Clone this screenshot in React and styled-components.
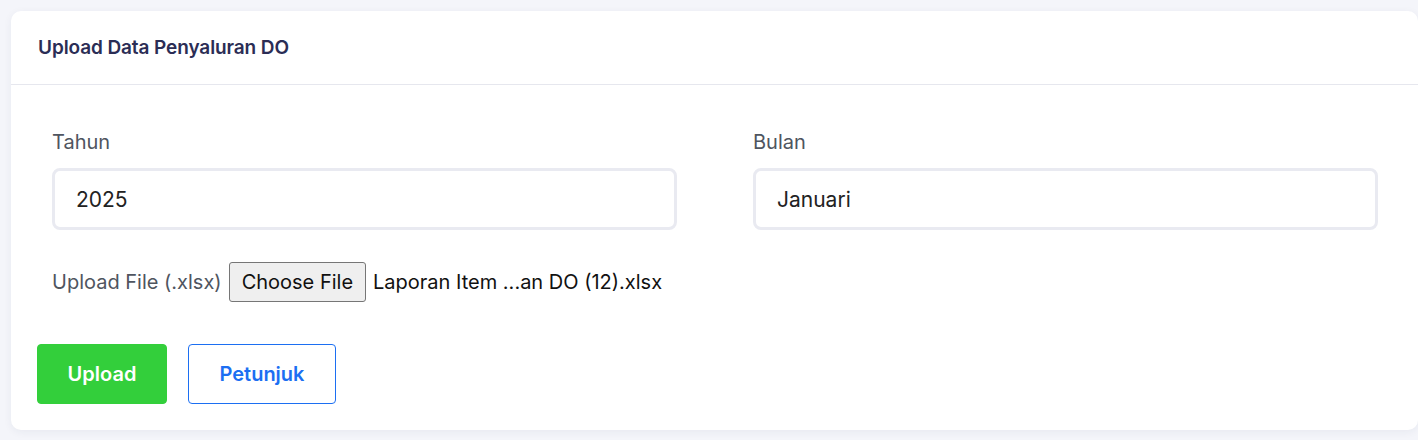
import React from 'react';
import styled, { createGlobalStyle } from 'styled-components';

const GlobalStyle = createGlobalStyle`
    body {
        margin: 0;
        background: #f4f5fa;
        font-family: 'Inter', 'Noto Sans', sans-serif;
    }
`;

const Page = styled.div`
    padding: 11px 0 0 11px;
    height: 440px;
    box-sizing: border-box;
    overflow: hidden;
`;

const Card = styled.section`
    background: #ffffff;
    border-radius: 10px;
    box-shadow: 0 2px 8px rgba(40, 45, 90, 0.06);
    width: 1407px;
    height: 419px;
`;

const CardHeader = styled.header`
    height: 74px;
    display: flex;
    align-items: center;
    padding: 0 27px;
    border-bottom: 1px solid #e6e7ee;
    box-sizing: border-box;
`;

const Title = styled.h1`
    margin: 0;
    font-size: 19px;
    font-weight: 600;
    letter-spacing: -0.1px;
    color: #2b2d55;
`;

const CardBody = styled.div`
    padding: 44px 40px 0 41px;
`;

const FieldGrid = styled.div`
    display: grid;
    grid-template-columns: 625px 625px;
    column-gap: 76px;
`;

const Field = styled.div`
    display: flex;
    flex-direction: column;
`;

const Label = styled.label`
    font-size: 20px;
    color: #4f5560;
    line-height: 26px;
    margin-bottom: 13px;
`;

const Input = styled.input`
    height: 62px;
    box-sizing: border-box;
    border: 3px solid #e9eaf1;
    border-radius: 8px;
    padding: 0 21px;
    font-family: inherit;
    font-size: 21px;
    color: #222;
    outline: none;
`;

const FileRow = styled.div`
    display: flex;
    align-items: center;
    gap: 7px;
    margin-top: 32px;
    font-size: 20px;
`;

const FileLabel = styled.span`
    color: #4f5560;
`;

const FileButton = styled.button`
    height: 40px;
    padding: 0 12px;
    font-family: inherit;
    font-size: 20px;
    color: #111;
    background: #efefef;
    border: 1px solid #767676;
    border-radius: 3px;
`;

const FileName = styled.span`
    color: #111;
`;

const Actions = styled.div`
    display: flex;
    gap: 21px;
    margin: 42px 0 0 -15px;
`;

const Button = styled.button`
    height: 60px;
    width: ${(p) => p.$width}px;
    font-family: inherit;
    font-size: 20px;
    font-weight: 600;
    border-radius: 4px;
    cursor: pointer;
    background: ${(p) => (p.$outline ? '#ffffff' : '#33cf3b')};
    color: ${(p) => (p.$outline ? '#1c6ff2' : '#ffffff')};
    border: 1px solid ${(p) => (p.$outline ? '#1c6ff2' : '#33cf3b')};
`;

const App = () => {
    return (
        <>
            <GlobalStyle />
            <Page>
                <Card>
                    <CardHeader>
                        <Title>Upload Data Penyaluran DO</Title>
                    </CardHeader>
                    <CardBody>
                        <FieldGrid>
                            <Field>
                                <Label>Tahun</Label>
                                <Input defaultValue="2025" />
                            </Field>
                            <Field>
                                <Label>Bulan</Label>
                                <Input defaultValue="Januari" />
                            </Field>
                        </FieldGrid>
                        <FileRow>
                            <FileLabel>Upload File (.xlsx)</FileLabel>
                            <FileButton>Choose File</FileButton>
                            <FileName>Laporan Item ...an DO (12).xlsx</FileName>
                        </FileRow>
                        <Actions>
                            <Button $width={130}>Upload</Button>
                            <Button $width={148} $outline>
                                Petunjuk
                            </Button>
                        </Actions>
                    </CardBody>
                </Card>
            </Page>
        </>
    );
};

export default App;
